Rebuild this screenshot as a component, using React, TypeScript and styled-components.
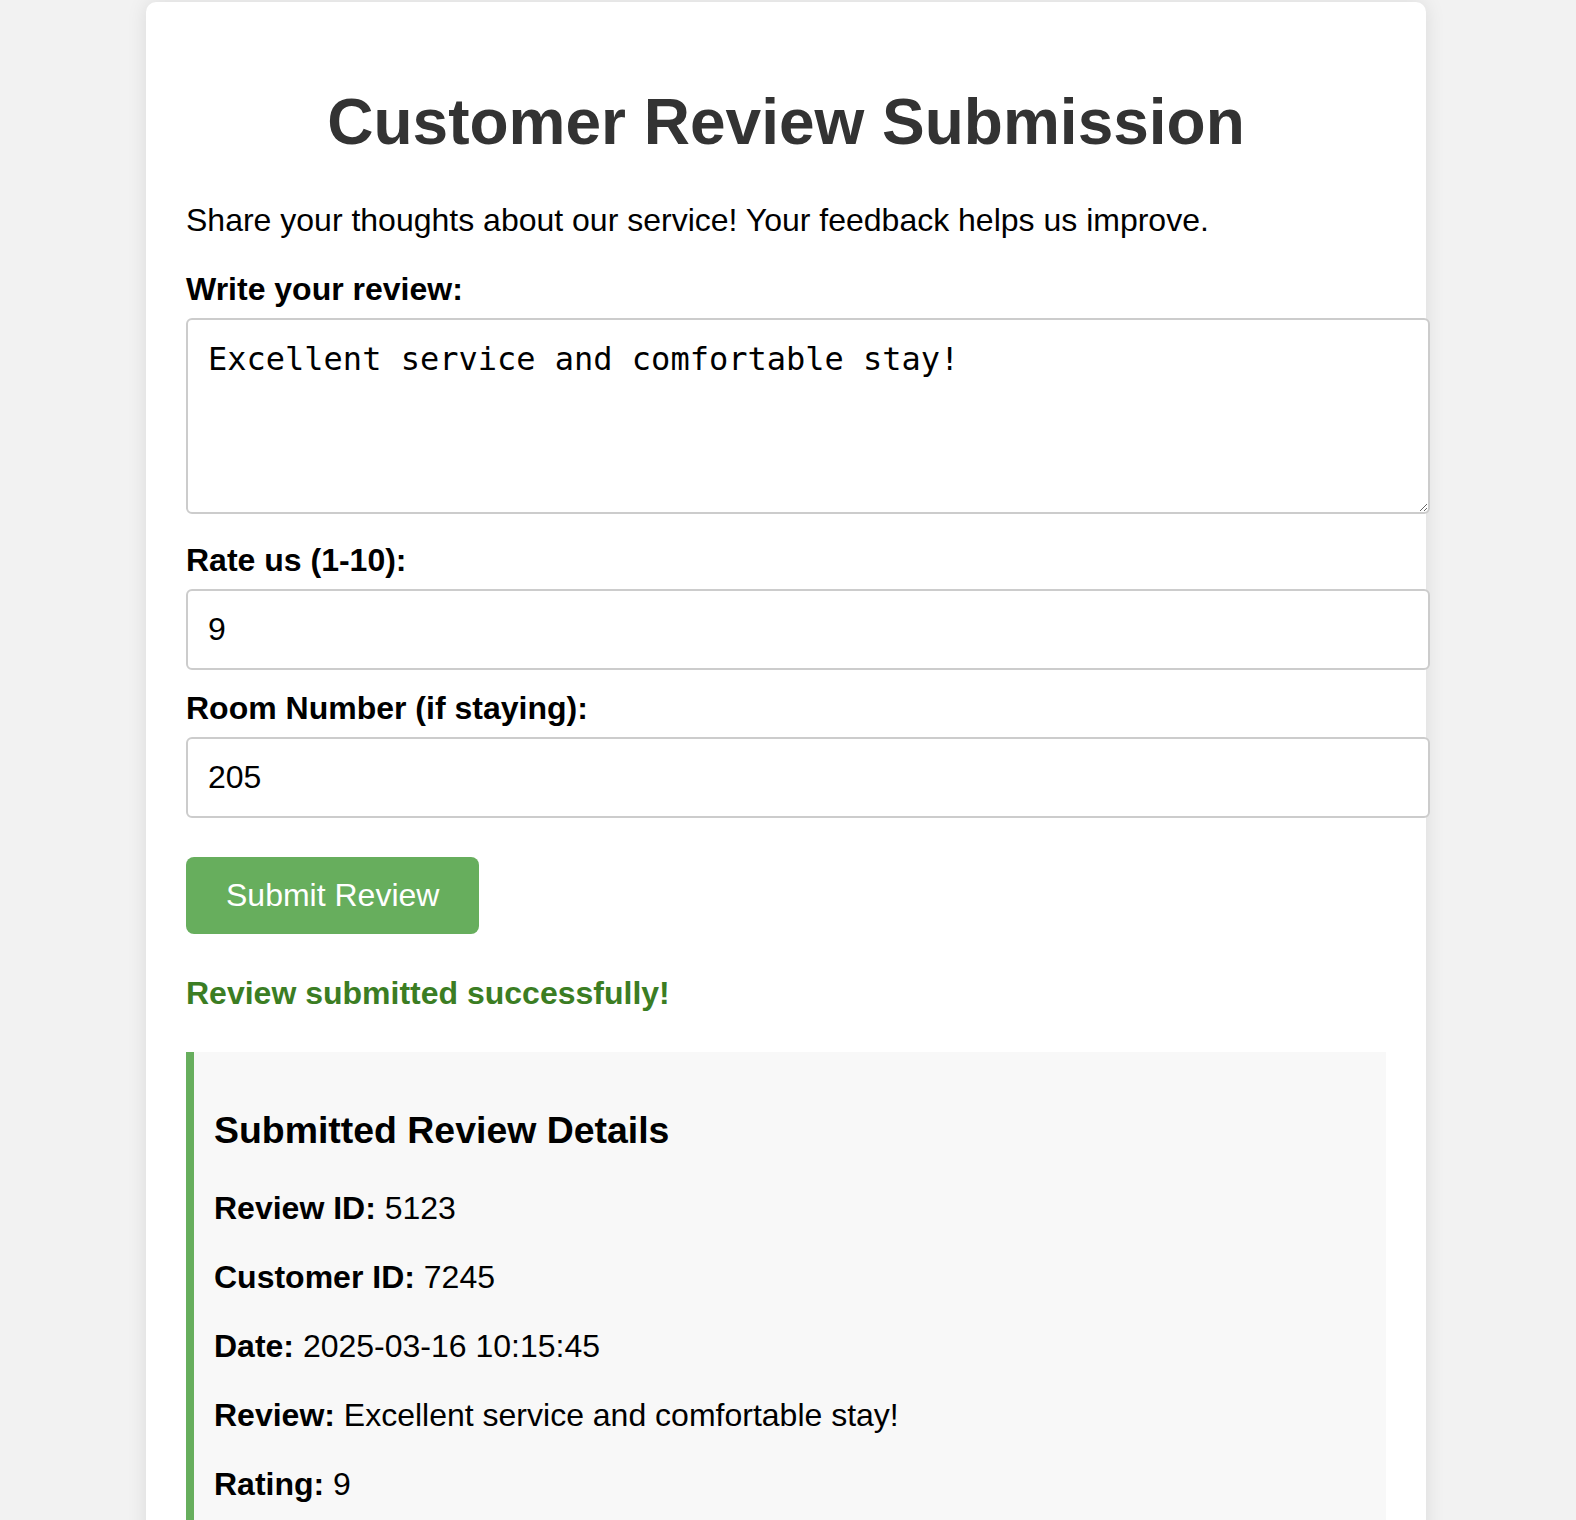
import React, { useState } from "react";
import styled, { createGlobalStyle } from "styled-components";

const GlobalStyle = createGlobalStyle`
  body {
    margin: 0;
    padding-right: 4px;
    background-color: #f2f2f2;
    font-family: "Liberation Sans", Arial, sans-serif;
    font-size: 32px;
    color: #000;
  }
`;

const Card = styled.div`
  max-width: 1200px;
  margin: 2px auto 0;
  padding: 40px;
  background-color: #ffffff;
  border-radius: 10px;
  box-shadow: 0 0 20px rgba(0, 0, 0, 0.1);
`;

const Title = styled.h1`
  margin: 42.88px 0;
  font-size: 64px;
  font-weight: bold;
  color: #333;
  text-align: center;
`;

const Intro = styled.p`
  margin: 32px 0;
`;

const Label = styled.label`
  display: block;
  margin-bottom: 10px;
  font-weight: bold;
`;

const TextArea = styled.textarea`
  width: 100%;
  height: 152px;
  padding: 20px;
  margin-bottom: 20px;
  border: 2px solid #ccc;
  border-radius: 6px;
  font-family: "DejaVu Sans Mono", "Liberation Mono", monospace;
  font-size: 32px;
  color: #000;
`;

const Input = styled.input`
  width: 100%;
  padding: 20px;
  margin-bottom: 20px;
  border: 2px solid #ccc;
  border-radius: 6px;
  font-family: "Liberation Sans", Arial, sans-serif;
  font-size: 32px;
  color: #000;
`;

const SubmitButton = styled.button`
  display: block;
  margin-top: 19px;
  padding: 20px 40px;
  border: none;
  border-radius: 8px;
  background-color: #67ae5d;
  color: #ffffff;
  font-family: "Liberation Sans", Arial, sans-serif;
  font-size: 32px;
  cursor: pointer;
`;

const Message = styled.p`
  margin: 41px 0 40px;
  font-weight: bold;
  color: #3b7d23;
`;

const Details = styled.div`
  padding: 20px 20px;
  background-color: #f8f8f8;
  border-left: 8px solid #67ae5d;
`;

const DetailsTitle = styled.h3`
  margin: 37.44px 0;
  font-size: 37.44px;
  font-weight: bold;
`;

const DetailRow = styled.p`
  margin: 32px 0;
`;

interface SubmittedReview {
  reviewId: number;
  customerId: number;
  date: string;
  review: string;
  rating: number;
  room: string;
}

const App: React.FC = () => {
  const [review, setReview] = useState("Excellent service and comfortable stay!");
  const [rating, setRating] = useState("9");
  const [room, setRoom] = useState("205");

  const submitted: SubmittedReview = {
    reviewId: 5123,
    customerId: 7245,
    date: "2025-03-16 10:15:45",
    review: "Excellent service and comfortable stay!",
    rating: 9,
    room: "205",
  };

  return (
    <>
      <GlobalStyle />
      <Card>
        <Title>Customer Review Submission</Title>
        <Intro>Share your thoughts about our service! Your feedback helps us improve.</Intro>

        <form onSubmit={(e) => e.preventDefault()}>
          <Label htmlFor="review">Write your review:</Label>
          <TextArea id="review" value={review} onChange={(e) => setReview(e.target.value)} />

          <Label htmlFor="rating">Rate us (1-10):</Label>
          <Input id="rating" type="text" value={rating} onChange={(e) => setRating(e.target.value)} />

          <Label htmlFor="room">Room Number (if staying):</Label>
          <Input id="room" type="text" value={room} onChange={(e) => setRoom(e.target.value)} />

          <SubmitButton type="submit">Submit Review</SubmitButton>
        </form>

        <Message>Review submitted successfully!</Message>

        {/* Submitted review */}
        <Details>
          <DetailsTitle>Submitted Review Details</DetailsTitle>
          <DetailRow>
            <strong>Review ID:</strong> {submitted.reviewId}
          </DetailRow>
          <DetailRow>
            <strong>Customer ID:</strong> {submitted.customerId}
          </DetailRow>
          <DetailRow>
            <strong>Date:</strong> {submitted.date}
          </DetailRow>
          <DetailRow>
            <strong>Review:</strong> {submitted.review}
          </DetailRow>
          <DetailRow>
            <strong>Rating:</strong> {submitted.rating}
          </DetailRow>
          <DetailRow>
            <strong>Room Number:</strong> {submitted.room}
          </DetailRow>
        </Details>
      </Card>
    </>
  );
};

export default App;
